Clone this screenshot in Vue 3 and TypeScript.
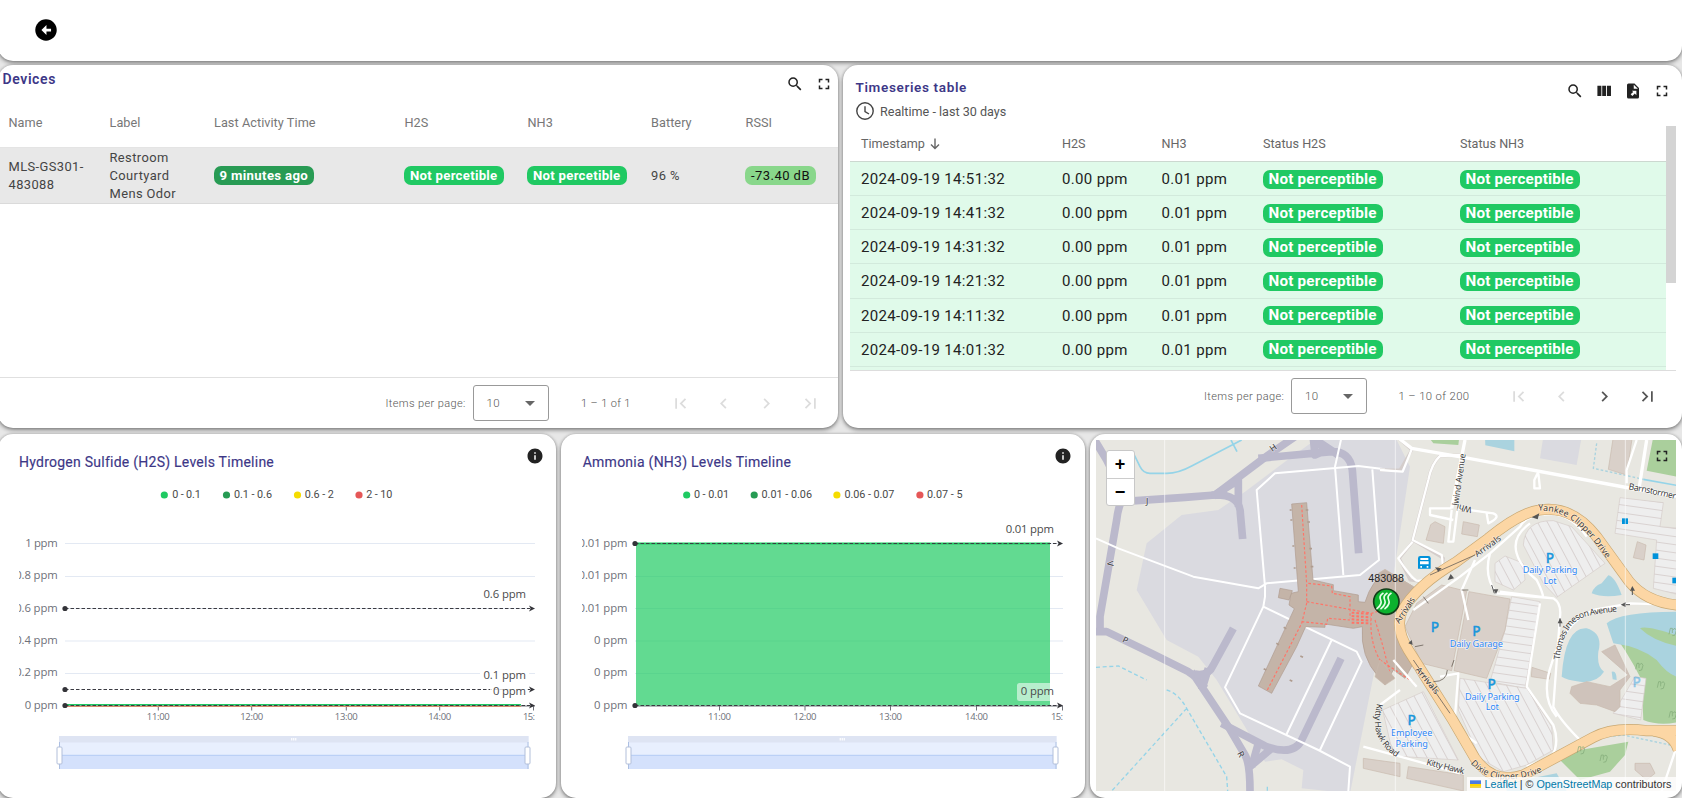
<script setup lang="ts">
const icons = {
  search: 'M9.5,3A6.5,6.5 0 0,1 16,9.5C16,11.11 15.41,12.59 14.44,13.73L14.71,14H15.5L20.5,19L19,20.5L14,15.5V14.71L13.73,14.44C12.59,15.41 11.11,16 9.5,16A6.5,6.5 0 0,1 3,9.5A6.5,6.5 0 0,1 9.5,3M9.5,5C7,5 5,7 5,9.5C5,12 7,14 9.5,14C12,14 14,12 14,9.5C14,7 12,5 9.5,5Z',
  full: 'M7 14H5v5h5v-2H7v-3zm-2-4h2V7h3V5H5v5zm12 7h-3v2h5v-5h-2v3zM14 5v2h3v3h2V5h-5z',
  columns: 'M9.6 18.5h5.2V5H9.6zM3.2 18.5h5.3V5H3.2zM16 5v13.5h5.3V5z',
  exportFile: 'M14,2H6A2,2 0 0,0 4,4V20A2,2 0 0,0 6,22H18A2,2 0 0,0 20,20V8L14,2M13,9V3.5L18.5,9H13M10.5,11.5H16.5V17.5L14.4,15.4L11.2,18.6L8.9,16.3L12.2,13.2Z',
  first: 'M18.41 16.59L13.82 12l4.59-4.59L17 6l-6 6 6 6zM6 6h2v12H6z',
  prev: 'M15.41 7.41L14 6l-6 6 6 6 1.41-1.41L10.83 12z',
  next: 'M10 6L8.59 7.41 13.17 12l-4.58 4.59L10 18l6-6z',
  last: 'M5.59 7.41L10.18 12l-4.59 4.59L7 18l6-6-6-6zM16 6h2v12h-2z',
  info: 'M12 2C6.48 2 2 6.48 2 12s4.48 10 10 10 10-4.48 10-10S17.52 2 12 2zm1 15h-2v-6h2v6zm0-8h-2V7h2v2z',
}
const pager: { path: string; enabledRight: boolean }[] = [
  { path: icons.first, enabledRight: false },
  { path: icons.prev, enabledRight: false },
  { path: icons.next, enabledRight: true },
  { path: icons.last, enabledRight: true },
]
const times = ['14:51:32', '14:41:32', '14:31:32', '14:21:32', '14:11:32', '14:01:32']

interface Tx { x: number; w: number; t: string }
interface Chart {
  title: string; cls: string; x0: number; width: number; plotL: number; plotR: number; dataR: number
  labelR: number; yLabels: { t: string; w: number }[]; ticks: number[]
  legend: { dot: number; c: string; x: number; w: number; t: string }[]
  marks: { y: number; label: Tx; ly: number }[]; area: boolean; s0: number; s1: number
}
const colors = ['#1fca62', '#269b53', '#f5dc00', '#e55757']
const charts: Chart[] = [
  {
    title: 'Hydrogen Sulfide (H2S) Levels Timeline', cls: 'c1', x0: 19, width: 517, plotL: 65, plotR: 535, dataR: 521, labelR: 57.7,
    yLabels: [{ t: '1 ppm', w: 32.5 }, { t: '0.8 ppm', w: 42.5 }, { t: '0.6 ppm', w: 42.5 }, { t: '0.4 ppm', w: 42.5 }, { t: '0.2 ppm', w: 42.5 }, { t: '0 ppm', w: 33 }],
    ticks: [158.3, 251.7, 346.3, 439.7, 533.5],
    legend: [
      { dot: 164.3, c: colors[0], x: 172.3, w: 28.5, t: '0 - 0.1' },
      { dot: 226.5, c: colors[1], x: 234, w: 38, t: '0.1 - 0.6' },
      { dot: 297.5, c: colors[2], x: 304.8, w: 29, t: '0.6 - 2' },
      { dot: 359, c: colors[3], x: 366.3, w: 26, t: '2 - 10' },
    ],
    marks: [
      { y: 608.5, label: { x: 483.5, w: 42.5, t: '0.6 ppm' }, ly: 598 },
      { y: 689.5, label: { x: 483.5, w: 42.5, t: '0.1 ppm' }, ly: 679 },
      { y: 705.5, label: { x: 493, w: 33, t: '0 ppm' }, ly: 695 },
    ],
    area: false, s0: 59, s1: 528.5,
  },
  {
    title: 'Ammonia (NH3) Levels Timeline', cls: 'c2', x0: 582, width: 482, plotL: 635, plotR: 1063, dataR: 1050, labelR: 627.5,
    yLabels: [{ t: '0.01 ppm', w: 49 }, { t: '0.01 ppm', w: 49 }, { t: '0.01 ppm', w: 49 }, { t: '0 ppm', w: 33.5 }, { t: '0 ppm', w: 33.5 }, { t: '0 ppm', w: 33.5 }],
    ticks: [719.5, 805, 890.5, 976.5, 1062.5],
    legend: [
      { dot: 686.7, c: colors[0], x: 694, w: 35, t: '0 - 0.01' },
      { dot: 754.2, c: colors[1], x: 761.5, w: 50.5, t: '0.01 - 0.06' },
      { dot: 836.9, c: colors[2], x: 844.4, w: 50, t: '0.06 - 0.07' },
      { dot: 919.9, c: colors[3], x: 927, w: 35.5, t: '0.07 - 5' },
    ],
    marks: [
      { y: 543.5, label: { x: 1005.7, w: 48.3, t: '0.01 ppm' }, ly: 533 },
      { y: 705.5, label: { x: 1020.7, w: 33.3, t: '0 ppm' }, ly: 695 },
    ],
    area: true, s0: 628, s1: 1056.5,
  },
]
const gridY = [543.5, 576.5, 608.5, 641, 673.5]
const labelY = [547, 579.3, 611.7, 644, 676.3, 709]
const hours = ['11:00', '12:00', '13:00', '14:00', '15:']
</script>

<template>
  <div class="page">
    <header class="card topbar">
      <svg class="back" viewBox="0 0 24 24"><circle cx="12" cy="12" r="11.7" /><path d="M12.5 6.5L7 12l5.5 5.5v-4h5v-3h-5z" /></svg>
    </header>

    <div class="row">
      <section class="card devices">
        <div class="head">
          <h2>Devices</h2>
          <div class="tools">
            <svg class="ic" viewBox="0 0 24 24"><path :d="icons.search" /></svg>
            <svg class="ic" viewBox="0 0 24 24"><path :d="icons.full" /></svg>
          </div>
        </div>
        <div class="drow dth">
          <span>Name</span><span>Label</span><span>Last Activity Time</span><span>H2S</span><span>NH3</span><span>Battery</span><span>RSSI</span>
        </div>
        <div class="drow dtd">
          <span>MLS-GS301-<br>483088</span>
          <span>Restroom<br>Courtyard<br>Mens Odor</span>
          <span><b class="pill dark">9 minutes ago</b></span>
          <span><b class="pill">Not percetible</b></span>
          <span><b class="pill">Not percetible</b></span>
          <span>96 %</span>
          <span><b class="pill light">-73.40 dB</b></span>
        </div>
        <div class="fill"></div>
        <footer class="pager left">
          <span class="ipp">Items per page:</span>
          <div class="select"><span>10</span><i></i></div>
          <span class="range">1 – 1 of 1</span>
          <svg v-for="(p, i) in pager" :key="i" class="pg" viewBox="0 0 24 24"><path :d="p.path" /></svg>
        </footer>
      </section>

      <section class="card series">
        <div class="shead">
          <div>
            <h2>Timeseries table</h2>
            <div class="window">
              <svg viewBox="0 0 20 20"><circle cx="10" cy="10" r="8.2" /><path d="M10 5.2V10.5L14 13" /></svg>
              <span>Realtime - last 30 days</span>
            </div>
          </div>
          <div class="tools">
            <svg class="ic" viewBox="0 0 24 24"><path :d="icons.search" /></svg>
            <svg class="ic" viewBox="0 0 24 24"><path :d="icons.columns" /></svg>
            <svg class="ic" viewBox="0 0 24 24"><path :d="icons.exportFile" fill-rule="evenodd" /></svg>
            <svg class="ic" viewBox="0 0 24 24"><path :d="icons.full" /></svg>
          </div>
        </div>
        <div class="sbody">
          <div class="stable">
            <div class="srow sth">
              <span>Timestamp <svg class="sort" viewBox="0 0 10 12"><path d="M5 .5V10.5M1 6.5L5 10.5L9 6.5" /></svg></span>
              <span>H2S</span><span>NH3</span><span>Status H2S</span><span>Status NH3</span>
            </div>
            <div v-for="t in times" :key="t" class="srow std">
              <span>2024-09-19 {{ t }}</span><span>0.00 ppm</span><span>0.01 ppm</span>
              <span><b class="pill big">Not perceptible</b></span><span><b class="pill big">Not perceptible</b></span>
            </div>
            <div class="peek"></div>
          </div>
          <div class="scroll"><div class="thumb"></div></div>
        </div>
        <footer class="pager right">
          <span class="ipp">Items per page:</span>
          <div class="select"><span>10</span><i></i></div>
          <span class="range">1 – 10 of 200</span>
          <svg v-for="(p, i) in pager" :key="i" class="pg" :class="{ on: p.enabledRight }" viewBox="0 0 24 24"><path :d="p.path" /></svg>
        </footer>
      </section>
    </div>

    <div class="row lower">
      <section v-for="c in charts" :key="c.cls" class="card chart" :class="c.cls">
        <div class="chead">
          <h3>{{ c.title }}</h3>
          <svg class="ic" viewBox="0 0 24 24"><path :d="icons.info" /></svg>
        </div>
        <svg class="plot" :width="c.width" height="300" :viewBox="`${c.x0} 480 ${c.width} 300`">
          <g class="legend">
            <template v-for="l in c.legend" :key="l.t">
              <circle :cx="l.dot" cy="495" r="3.6" :fill="l.c" />
              <text :x="l.x" y="498.3" :textLength="l.w">{{ l.t }}</text>
            </template>
          </g>
          <path v-for="y in gridY" :key="y" :d="`M${c.plotL} ${y}H${c.plotR}`" stroke="#e3e9f3" />
          <text v-for="(l, i) in c.yLabels" :key="i" class="yl" :x="c.labelR - l.w" :y="labelY[i]" :textLength="l.w">{{ l.t }}</text>
          <path :d="`M${c.plotL} 706H${c.plotR}`" stroke="#6e7079" />
          <template v-for="(t, i) in c.ticks" :key="t">
            <path :d="`M${t} 706v4.5`" stroke="#6e7079" />
            <text class="xl" :x="i === 4 ? c.plotR - 12 : t - 11.5" y="720" :textLength="i === 4 ? 12 : 23">{{ hours[i] }}</text>
          </template>
          <template v-if="c.area">
            <rect x="636" y="543" width="414" height="162.5" fill="#1fca62" fill-opacity=".7" />
            <path d="M636 543.5H1050" stroke="#1fca62" stroke-width="2" />
          </template>
          <template v-else>
            <path d="M65 704.8H521" stroke="#1fca62" stroke-width="1.6" /><path d="M65 706.5H521" stroke="#d98b6c" />
          </template>
          <g v-for="m in c.marks" :key="m.y">
            <path :d="`M${c.plotL} ${m.y}H${c.plotR - 5}`" stroke="#3b3b42" stroke-dasharray="3.5 2" />
            <circle :cx="c.plotL" :cy="m.y" r="2.6" fill="#333338" />
            <path :d="`M${c.plotR} ${m.y}l-6 -3l1.6 3l-1.6 3z`" fill="#333338" />
          </g>
          <rect v-if="c.area" x="1017" y="683" width="42" height="18" rx="2.5" fill="#fff" fill-opacity=".55" />
          <template v-else>
            <rect x="480" y="667" width="49" height="16" fill="#fff" />
            <rect x="490" y="684" width="38" height="15" fill="#fff" opacity=".8" />
          </template>
          <text v-for="m in c.marks" :key="m.ly" class="ml" :x="m.label.x" :y="m.ly" :textLength="m.label.w">{{ m.label.t }}</text>
          <g>
            <rect :x="c.s0" y="736" :width="c.s1 - c.s0" height="33" fill="#e8effe" />
            <rect :x="c.s0" y="736" :width="c.s1 - c.s0" height="6.5" fill="#dee4f3" />
            <rect :x="c.s0" y="755" :width="c.s1 - c.s0" height="14" fill="#d4e1fc" />
            <path :d="`M${c.s0} 755.3H${c.s1}`" stroke="#b4ccf4" />
            <path :d="`M${(c.s0 + c.s1) / 2 - 2} 738v2.5m2 -2.5v2.5m2 -2.5v2.5`" stroke="#fff" stroke-width="1.2" />
            <path :d="`M${c.s0 + .5} 742V769M${c.s1 - .5} 742V769`" stroke="#acbfe2" />
            <rect :x="c.s0 - 2" y="747" width="5" height="17" rx="1" fill="#fff" stroke="#b2bfda" />
            <rect :x="c.s1 - 3.5" y="747" width="5" height="17" rx="1" fill="#fff" stroke="#b2bfda" />
          </g>
        </svg>
      </section>

      <section class="card mapcard">
        <div class="map">
          <svg width="580" height="351" viewBox="33 30 1740 1053">
            <defs>
              <pattern id="bays" width="26" height="26" patternUnits="userSpaceOnUse" patternTransform="rotate(-28)"><rect width="26" height="26" fill="#eeeeee" /><path d="M0 0V26" stroke="#d5cdcc" stroke-width="5" /></pattern>
              <pattern id="bays2" width="26" height="24" patternUnits="userSpaceOnUse" patternTransform="rotate(8)"><rect width="26" height="24" fill="#eeeeee" /><path d="M0 0H26" stroke="#d5cdcc" stroke-width="5" /></pattern>
              <path id="yank" d="M1360 242Q1440 240 1495 300Q1540 345 1590 425" />
              <path id="arr1" d="M1177 382L1255 325" /><path id="arr2" d="M943 582L1000 495" />
              <path id="arr3" d="M990 720L1065 810" />
              <path id="barn" d="M1630 178Q1700 190 1790 212" />
              <path id="whirl" d="M1120 228L1144 60" /><path id="whi" d="M1162 232L1110 220" />
              <path id="thomas" d="M1424 690Q1435 580 1500 560Q1550 548 1610 543" />
              <path id="kitty" d="M876 820Q860 890 882 925Q900 965 950 990" />
              <path id="kitty2" d="M1023 1004L1165 1040" /><path id="dixie" d="M1157 1000Q1200 1050 1270 1048T1395 1012" />
            </defs>
            <rect width="1800" height="1100" fill="#e8e7e1" />
            <path d="M690 30H935L975 110L925 440L865 740L795 1090L650 1075L655 1020L590 988L540 995L480 890L395 750L340 680L245 630L155 480L185 340L290 255L400 240L480 185L600 95Z" fill="#dadae0" />
            <g fill="none" stroke="#95d4e8" stroke-width="5">
              <path d="M148 75L165 110Q175 130 195 130H245Q280 130 320 108L470 30M438 30L456 65" />
              <path d="M33 712L100 708L185 750M245 780Q280 790 305 835L425 1040L428 1083M305 835L80 1083M547 1070V1083" stroke-dasharray="12 8" stroke-width="4" />
            </g>
            <g fill="none" stroke="#bbb9cc" stroke-width="23" stroke-linejoin="round">
              <path d="M20 15L65 90L105 170L120 215M110 215L300 202L390 195L540 82L630 20M115 205Q100 225 95 270L45 560V600" />
              <path d="M25 605H65L200 670L310 725Q335 740 360 775M320 725L430 890L480 975Q495 1000 495 1083" />
              <path d="M380 195Q465 190 466 250L473 327M385 198L460 150V230M520 85L740 65Q795 65 802 120L821 370M685 25L690 75L725 60L685 30M700 35L760 75" />
              <path d="M330 732Q370 740 385 705L445 595M350 780L370 715M410 880L540 948Q625 980 650 930L768 685M520 940L500 1010M495 1010L560 955" />
            </g>
            <g fill="none" stroke="#fff" stroke-width="6" stroke-linejoin="round">
              <path d="M900 118L820 108L570 130L515 180L540 470L540 500L535 530L420 772L465 850L700 960L795 1010L790 1083M770 20L750 110L775 435M33 325L100 355L325 440L520 475L545 460L825 435L882 390L862 118M535 530L815 665L830 695L705 960M740 630L605 912" />
            </g>
            <g fill="#c4b4a8" stroke="#af9c8f" stroke-width="2">
              <path d="M620 222L665 218L684 450L745 464V482L820 495V515L840 517Q860 450 905 425L960 455L985 470L960 540L930 580L985 700L960 745L925 720L900 765L880 740Q825 680 832 590L805 595L720 582V592L662 590L635 650L560 790L520 768L628 536L612 525L618 490L640 485Z" />
              <path d="M585 475L622 482L612 510L580 503Z" />
            </g>
            <path d="M620 240h-6m8 30h-6m12 78h-6m10 66h-6m36-174h8m-3 36h8m-2 80h8m-4 54h8M604 596l-8-4m-14 52l-8-4m-30 80l-8-4m78 34l8 4m24-76l8 4" stroke="#af9c8f" stroke-width="5" />
            <g fill="none" stroke="#ff7468" stroke-width="3.5" stroke-dasharray="8 6">
              <path d="M650 225L665 460V520L650 580L547 780M670 460L740 468L742 490L795 500V565M665 515L860 550L920 530M650 575L725 583L728 565L795 570M860 550Q850 630 885 690M870 570L890 635L915 730M885 690L990 760" />
              <path d="M800 548L857 552M800 558L857 562M800 568L857 572M800 578L855 580" stroke-width="6" />
            </g>

            <g transform="translate(885 0)">
              <g fill="#aacf9c">
                <path d="M145 20H238L235 45L160 40ZM820 20H900V142L800 122ZM685 590Q740 660 785 750L790 870Q840 890 900 875V570ZM540 990L600 960L745 935L735 975L690 1025L600 1050Z" />
              </g>
              <g fill="#aad3df">
                <path d="M315 20H403V64L316 46ZM685 436Q705 440 725 495Q670 505 635 490Q640 470 665 460ZM545 740Q555 590 620 595Q670 610 655 665Q650 710 672 725Q650 760 600 755Q560 750 545 740ZM680 580Q720 545 890 545V740Q860 730 830 690Q780 650 700 640ZM695 725Q710 720 710 750L698 748ZM380 1060L530 1030L560 1083H380Z" />
              </g>
              <path d="M780 595Q800 585 900 620V650Q820 635 780 595Z" fill="#aacf9c" />
              <path d="M490 20H605L590 105L480 85Z" fill="#dadae0" />
              <g fill="none" stroke="#aad3df" stroke-width="4" stroke-dasharray="8 6"><path d="M650 40L640 115L790 148M630 925L730 915L870 945" /></g>
              <path d="M790 148L900 168" stroke="#95d4e8" stroke-width="5" />
              <g stroke="#d5cbc9" stroke-width="2">
                <path d="M430 345Q435 270 520 272L575 290L675 400L530 502L490 460Z" fill="url(#bays)" />
                <path d="M345 400L375 378L430 400L435 450L400 480L345 455Z" fill="url(#bays)" />
                <path d="M720 203L850 218L840 290L900 295V495L820 475L830 330L705 310Z" fill="url(#bays2)" />
                <path d="M395 500L480 515L435 775L330 755L375 600Z" fill="url(#bays2)" />
                <path d="M240 745L440 775L515 890L520 960L440 1005L370 1025L300 985L235 840Z" fill="url(#bays)" />
                <path d="M8 840L130 785L235 990L40 978Z" fill="url(#bays)" />
                <path d="M765 740L798 745L782 870L700 850Z" fill="url(#bays2)" />
              </g>
              <g fill="#d9d0c9" stroke="#c8b9ae" stroke-width="2">
                <path d="M185 465L260 484L215 722L125 700L75 590L110 520ZM267 485L390 507L375 600L320 745L222 722ZM152 284L165 275L195 290L190 340L138 330ZM250 275L298 285L292 320L245 312ZM700 20H757L740 135L685 118ZM772 335L798 345L792 390L760 383ZM456 712L512 730L508 748L454 740ZM85 1010L250 1035V1083L80 1045ZM-50 985L60 1000V1040L-50 1015ZM765 1000L810 1000L825 1030L800 1050L765 1020Z" />
                <path d="M575 770L620 755L690 770L745 735L665 665L705 645L750 740L720 780L720 830L705 845L650 825L600 820L570 790Z" fill="#cfc3bb" />
                <path d="M0 690L45 745L15 765L-15 740Z" fill="#c4b4a8" />
                <path d="M-5 430L15 418L108 475L60 520Z" fill="#c4b4a8" />
              </g>
              <g fill="none" stroke="#d4cdcb" stroke-width="9" stroke-linejoin="round">
                <path d="M245 75L180 78Q155 100 145 150L98 330L190 385L185 420L130 455L90 450L58 385L98 335M0 120H60L95 60L50 20" />
              </g>
              <g fill="none" stroke="#fff" stroke-width="7" stroke-linejoin="round">
                <path d="M900 200L780 180L250 82L95 55L50 20M255 30L245 80L215 235M800 30L778 170" stroke-width="10" />
                <path d="M0 120L68 125L95 58M475 125L463 150V175H480L475 130M740 160V120L770 30" />
                <path d="M245 75L180 78Q155 100 145 150L98 330L185 375Q190 400 185 420Q150 455 110 452Q90 440 55 385L98 335M215 235H150V255L220 270M215 240L205 335H220L232 240M232 235L340 250Q365 260 325 280L320 250" />
                <path d="M100 540L240 440L330 370L420 290Q440 250 520 252Q580 260 620 320M285 390L245 480L265 570M450 280Q395 320 410 370Q420 410 470 450Q490 490 490 505M330 370Q310 440 350 490L520 505Q545 520 540 560L520 830Q540 870 600 930M480 520L440 770L520 885Q540 940 515 980L440 1010M360 485L520 505M900 525L750 520L640 540Q550 580 515 700Q480 800 530 860" />
                <path d="M180 740L235 730L225 860Q230 900 290 940M0 825L60 780M-50 950L80 985L240 1030M40 690L110 770M890 950L845 1083" />
              </g>
              <g fill="none" stroke-linejoin="round">
                <path d="M900 526Q800 518 748 455L650 320Q575 225 480 240Q420 247 325 325L230 395Q110 465 65 545Q45 595 85 660L215 865L285 985Q340 1065 430 1035L640 922Q700 890 800 902H900M820 903Q880 910 895 960" stroke="#c8a873" stroke-width="33" />
                <path d="M900 526Q800 518 748 455L650 320Q575 225 480 240Q420 247 325 325L230 395Q110 465 65 545Q45 595 85 660L215 865L285 985Q340 1065 430 1035L640 922Q700 890 800 902H900M820 903Q880 910 895 960" stroke="#fcd6a4" stroke-width="29" />
                <path d="M150 435L285 375M100 690L210 850M130 500L145 520M245 480H265M105 650L130 645M215 710L222 690M160 755Q200 755 202 720" stroke="#6d655d" stroke-width="2.5" />
              </g>
              <path d="M185 415L165 412L175 425ZM203 450L212 432L222 445ZM455 262L478 250L473 268ZM348 492L340 478H355ZM757 468L750 482H765ZM722 524L738 516V532ZM540 565L533 580H548ZM98 645L85 640L95 630Z" fill="#555" />
              <path d="M757 475V495M735 524H750M540 565V590M343 490L335 465" stroke="#555" stroke-width="3" fill="none" />
              <g fill="#0092da">
                <rect x="726" y="265" width="18" height="17" /><rect x="818" y="370" width="17" height="17" /><rect x="877" y="443" width="17" height="17" />
                <path d="M114 385q0-7 7-7h24q7 0 7 7v31h-38z" /><path d="M121 384h24v6h-24zM120 394h26v9h-26zM121 408h5v5h-5zM140 408h5v5h-5z" fill="#fff" />
              </g>
              <g class="parking">
                <text x="510" y="398">P</text><text x="165" y="607">P</text><text x="289" y="619">P</text><text x="335" y="778">P</text><text x="95" y="886">P</text><text x="770" y="770" opacity=".45">P</text>
              </g>
              <g class="place">
                <text x="510" y="430" textLength="164">Daily Parking</text><text x="510" y="462" textLength="39">Lot</text>
                <text x="289" y="651" textLength="160">Daily Garage</text>
                <text x="337" y="809" textLength="164">Daily Parking</text><text x="337" y="841" textLength="39">Lot</text>
                <text x="95" y="918" textLength="124">Employee</text><text x="95" y="950" textLength="97">Parking</text>
              </g>
              <g fill="none" stroke="#7fa776" stroke-width="2"><path v-for="p in ['775 710', '840 765', '875 855', '600 960', '668 985', '875 605']" :key="p" :d="`M${p}m-8 8l4-18l6 0l0 14m2-10l6-4l4 6l-4 14l-8 2`" /></g>
            </g>
            <path v-for="x in [239, 931, 1621]" :key="x" :d="`M${x} 30V1083`" stroke="#fff" stroke-opacity=".6" stroke-width="3" />

            <g class="road">
              <text><textPath href="#yank" textLength="262">Yankee Clipper Drive</textPath></text>
              <text><textPath href="#arr1" textLength="90">Arrivals</textPath></text>
              <text><textPath href="#arr2" textLength="88">Arrivals</textPath></text>
              <text><textPath href="#arr3" textLength="96">Arrivals</textPath></text>
              <text><textPath href="#barn" textLength="144">Barnstormer</textPath></text>
              <text><textPath href="#whirl" textLength="158">lwind Avenue</textPath></text>
              <text><textPath href="#whi" textLength="46">Whi</textPath></text>
              <text><textPath href="#thomas" textLength="258">Thomas Imeson Avenue</textPath></text>
              <text><textPath href="#kitty" textLength="186">Kitty Hawk Road</textPath></text>
              <text><textPath href="#kitty2" textLength="116">Kitty Hawk</textPath></text>
              <text><textPath href="#dixie" textLength="232">Dixie Clipper Drive</textPath></text>
              <text transform="translate(562 66) rotate(-35)">H</text><text x="183" y="226">J</text>
              <text transform="translate(66 394) rotate(85)">V</text><text transform="translate(110 635) rotate(25)">P</text><text transform="translate(456 970) rotate(62)">R</text>
            </g>
            <text class="mk" x="850" y="456" textLength="107">483088</text>
            <circle cx="904" cy="515" r="38" fill="#0cb22e" stroke="#123d19" stroke-width="5" />
            <g fill="none" stroke="#e6ffe9" stroke-width="5" stroke-linecap="round">
              <path v-for="x in [882, 894, 906]" :key="x" :d="`M${x + 12} 490q-13 8-7 20t-11 26`" />
            </g>
          </svg>
          <div class="zoombox"><span>+</span><span>−</span></div>
          <svg class="ic mapfull" viewBox="0 0 24 24"><path :d="icons.full" /></svg>
          <div class="attr"><svg viewBox="0 0 12 8"><path fill="#4C7BE1" d="M0 0h12v4H0z" /><path fill="#FFD500" d="M0 4h12v3H0z" /><path fill="#E0BC00" d="M0 7h12v1H0z" /></svg> <a>Leaflet</a> | © <a>OpenStreetMap</a> contributors</div>
        </div>
      </section>
    </div>
  </div>
</template>

<style>
body { margin: 0; overflow: hidden; }
</style>

<style scoped>
.page { width: 1684px; height: 798px; margin-left: -2px; box-sizing: border-box; background: #e7e7e7; display: flex; flex-direction: column; gap: 5px; overflow: hidden; font-family: Roboto, sans-serif; color: #333; }
.card { background: #fff; border-radius: 15px; box-shadow: 0 2px 4px rgba(0, 0, 0, .42), 0 0 3px rgba(0, 0, 0, .2); box-sizing: border-box; flex-shrink: 0; }
.topbar { height: 61px; margin-bottom: -1px; border-radius: 0 0 15px 15px; padding: 19px 0 0 36.5px; }
.back { width: 22px; height: 22px; display: block; }
.back path { fill: #fff; }
.row { display: flex; gap: 5px; flex-shrink: 0; }
.lower { margin-top: 1px; }
h2, h3 { margin: 0; color: #3d3787; font-weight: 500; font-size: 14px; line-height: 20px; white-space: nowrap; }
h2 { font-size: 13.5px; letter-spacing: .65px; font-weight: 600; }
h3 { letter-spacing: .25px; font-weight: 400; -webkit-text-stroke: .15px #3d3787; }
.ic { width: 18px; height: 18px; fill: #222; display: block; }
.tools { display: flex; gap: 11px; }

.devices { width: 840px; height: 363px; display: flex; flex-direction: column; }
.devices h2 { font-size: 14px; letter-spacing: .6px; line-height: 19px; }
.head { height: 34px; display: flex; justify-content: space-between; padding: 5px 5px 0 4.5px; box-sizing: border-box; }
.head .tools { padding-top: 5px; }
.drow { display: grid; grid-template-columns: 101px 104.5px 190.5px 123px 123.5px 94.5px 1fr; padding-left: 10.5px; align-items: center; white-space: nowrap; box-sizing: border-box; }
.dth { height: 49px; font-size: 12.7px; letter-spacing: .06px; color: #777; border-bottom: 1px solid #e4e4e4; padding-bottom: 2px; flex-shrink: 0; }
.dtd { height: 56px; flex-shrink: 0; background: #e8e8e8; border-bottom: 1.5px solid #dadada; font-size: 12.9px; line-height: 18px; letter-spacing: .4px; color: #444; padding-top: 1px; }
.pill { display: inline-block; height: 19px; line-height: 19px; padding: 0 6px; border-radius: 7px; background: #20c963; color: #fff; font-weight: 700; font-size: 13.2px; letter-spacing: .27px; vertical-align: middle; margin-left: -.5px; margin-top: -1px; }
.pill.dark { background: #289b54; letter-spacing: .34px; }
.pill.light { background: #89d78b; color: #111; font-weight: 400; font-size: 13px; letter-spacing: .45px; }
.pill.big { font-size: 15.2px; letter-spacing: .22px; }
.fill { flex: 1; }
.pager { display: flex; align-items: center; font-size: 11px; font-weight: 300; color: #555; letter-spacing: .38px; box-sizing: border-box; white-space: nowrap; flex-shrink: 0; }
.left { border-top: 1px solid #e0e0e0; height: 51px; padding-left: 387.5px; }
.ipp { width: 87px; flex-shrink: 0; }
.select { width: 76px; height: 36px; border: 1px solid #999; border-radius: 3px; box-sizing: border-box; display: flex; align-items: center; justify-content: space-between; padding: 0 13px; font-size: 11.5px; flex-shrink: 0; }
.select i { border: 5px solid transparent; border-top-color: #666; border-bottom: 0; }
.range { width: 89px; margin-left: 32.5px; flex-shrink: 0; }
.right .range { width: 109px; margin-left: 31.5px; font-size: 11.3px; }
.pg { width: 21px; height: 21px; margin-right: 22.2px; fill: #dcdcdc; flex-shrink: 0; }
.pg.on { fill: #555; }

.series { width: 839px; height: 363px; padding-left: 7px; display: flex; flex-direction: column; }
.shead { height: 61px; box-sizing: border-box; display: flex; justify-content: space-between; padding: 12px 11px 0 5.5px; flex-shrink: 0; }
.shead .tools { padding-top: 5px; }
.window { display: flex; align-items: center; gap: 5px; font-size: 12.6px; color: #555; margin-top: 5px; }
.window svg { width: 20px; height: 20px; fill: none; stroke: #444; stroke-width: 1.4; margin-left: -.5px; margin-top: -1px; }
.sbody { display: flex; width: 826px; height: 244px; border-bottom: 1px solid #ddd; flex-shrink: 0; overflow: hidden; }
.stable { width: 816px; }
.scroll { width: 10px; }
.thumb { height: 157px; background: #d4d4d4; }
.srow { display: grid; grid-template-columns: 201px 99.5px 101.5px 197px 1fr; padding-left: 11px; align-items: center; white-space: nowrap; box-sizing: border-box; }
.sth { height: 36px; font-size: 12.6px; color: #666; border-bottom: 1px solid #ccd8d0; }
.sort { width: 10px; height: 12px; fill: none; stroke: #666; stroke-width: 1.4; vertical-align: -2px; margin-left: 2px; }
.std { height: 34.15px; background: #e0faea; border-bottom: 1px solid #d2eadc; font-size: 15px; letter-spacing: .35px; color: #222; padding-top: 1px; }
.peek { height: 10px; background: #e0faea; }
.right { height: 50px; padding-left: 354px; }

.chart { height: 363.5px; }
.c1 { width: 558px; padding-left: 21px; }
.c2 { width: 524px; padding-left: 21px; }
.chead { height: 46px; display: flex; justify-content: space-between; padding: 19px 12.5px 0 0; box-sizing: border-box; }
.c2 .chead { padding-left: .7px; padding-right: 13.2px; }
.chead .ic { margin-top: -6.3px; }
.chead h3 { line-height: 18px; }
.plot { display: block; overflow: hidden; }
.legend text { font-family: Roboto, sans-serif; font-size: 10.8px; fill: #4a4a4a; }
.yl { font-family: "Open Sans", sans-serif; font-size: 11.3px; fill: #6e7079; }
.xl { font-family: "Open Sans", sans-serif; font-size: 9.5px; fill: #6e7079; }
.ml { font-family: "Open Sans", sans-serif; font-size: 11.3px; fill: #4a4a4a; }

.mapcard { width: 592px; height: 363.5px; padding: 6px; }
.map { position: relative; width: 580px; height: 351px; overflow: hidden; }
.map > svg:first-child { display: block; }
.parking text { font: 500 41px "Noto Sans", sans-serif; fill: #1a97dc; text-anchor: middle; stroke: #1a97dc; stroke-width: 1; }
.place text { font: 27.5px "Noto Sans", sans-serif; fill: #2e86f5; text-anchor: middle; paint-order: stroke; stroke: #fff; stroke-opacity: .7; stroke-width: 4; }
.road text { font: 26px "Noto Sans", sans-serif; fill: #3c3c3c; paint-order: stroke; stroke: #fff; stroke-opacity: .45; stroke-width: 4; }
.mk { font: 32px "Liberation Sans", sans-serif; fill: #222; }
.zoombox { position: absolute; left: 10px; top: 10px; width: 29px; height: 56px; box-sizing: border-box; background: #fff; border: 1px solid #c8c8c8; border-radius: 3px; display: flex; flex-direction: column; }
.zoombox span { flex: 1; text-align: center; font: bold 18px/27px "Liberation Sans", sans-serif; color: #000; text-indent: -1px; }
.zoombox span + span { border-top: 1px solid #ccc; }
.mapfull { position: absolute; left: 557px; top: 7px; }
.attr { position: absolute; right: 0; bottom: 0; height: 14px; padding: 0 4.5px 0 3px; background: rgba(255, 255, 255, .8); font: 10.75px/14px "Liberation Sans", sans-serif; color: #333; white-space: nowrap; }
.attr a { color: #0078a8; }
.attr svg { width: 11px; height: 8px; }
</style>
